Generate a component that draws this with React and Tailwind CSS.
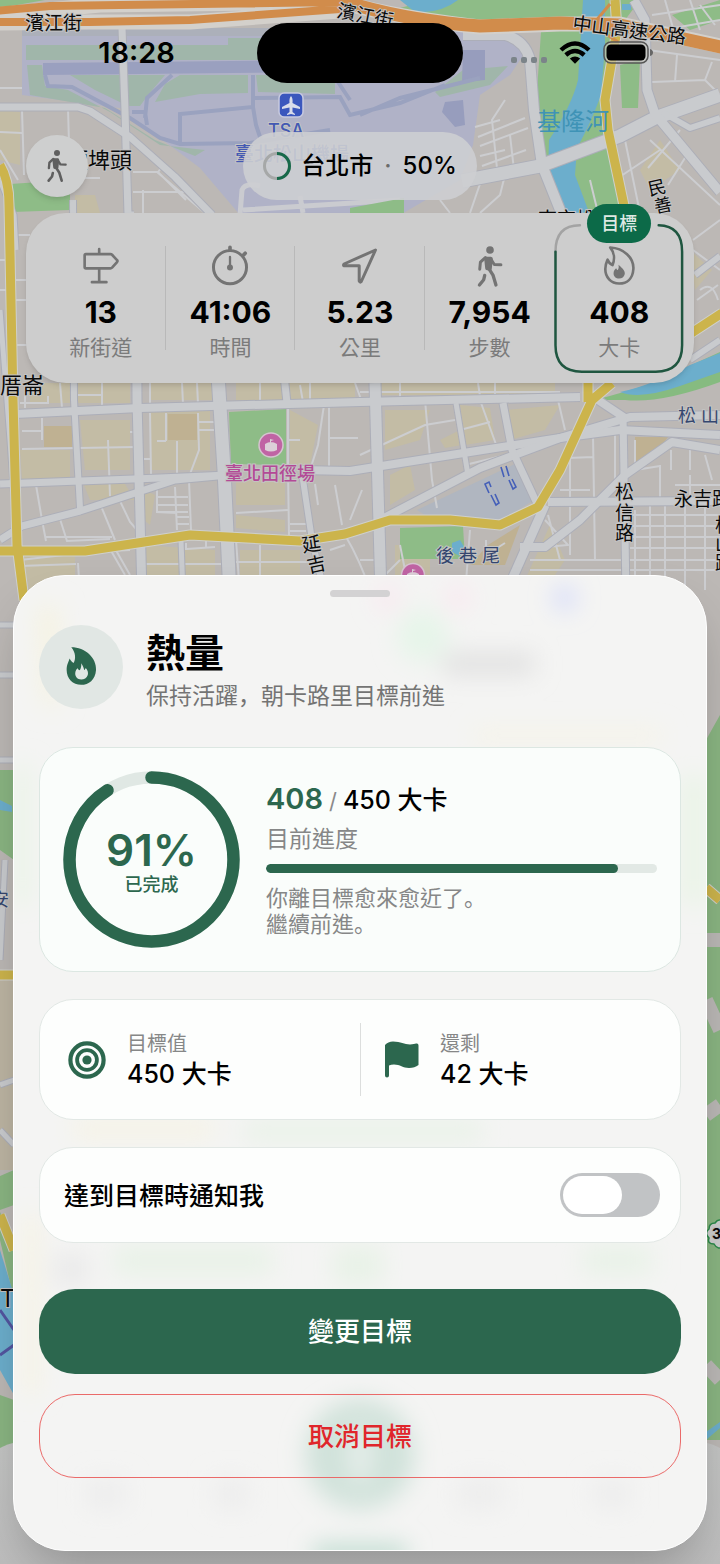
import { useState } from "react";

const FLAME =
  "M25 10C65 12 97 40 95 75C93 105 75 119 52 119C27 119 10 100 10 75C10 60 15 52 17 47C20 55 25 60 32 63C38 48 39 26 25 10Z";
const FLAME_CORE =
  "M50 62C65 75 70 82 69 90C67 100 60 104 52 104C42 104 35 98 35 88C35 80 40 76 43 73C45 78 47 78 48 78C51 73 51 68 50 62Z";
const FLAME_SOLID =
  "M22 6C64 6 99 38 97 75C95 105 75 120 52 120C27 120 8 101 8 75C8 58 14 50 17 40C20 46 25 51 29 54C36 42 36 22 22 6Z";
const FLAME_HOLE =
  "M52 55C58 63 60 70 61 75C64 74 65 71 66 69C72 77 74 83 72 90C69 99 61 104 52 104C41 104 34 96 34 86C34 78 38 73 41 70C43 74 45 76 48 76C52 70 53 62 52 55Z";

function SignpostIcon() {
  return (
    <svg viewBox="0 0 112 120" className="h-10 w-[37px]" fill="none" stroke="currentColor" strokeWidth="8" strokeLinecap="round" strokeLinejoin="round">
      <path d="M52 9V23M12 24H86Q89 24 91 26L106 42Q109 45 106 48L91 65Q89 67 86 67H12Q8 67 8 63V28Q8 24 12 24ZM52 67V108M30 109H74" />
    </svg>
  );
}

function StopwatchIcon() {
  return (
    <svg viewBox="0 0 120 130" className="h-[43px] w-10" fill="none" stroke="currentColor" strokeWidth="9" strokeLinecap="round">
      <circle cx="60" cy="67" r="50" />
      <path d="M60 36V67" strokeWidth="7" />
      <circle cx="60" cy="68" r="9" fill="currentColor" stroke="none" />
      <path d="M60 7V14M102 29L106 25" strokeWidth="11" />
    </svg>
  );
}

function ArrowIcon() {
  return (
    <svg viewBox="0 0 40 40" className="h-10 w-10" fill="none" stroke="currentColor" strokeWidth="3" strokeLinejoin="round">
      <path d="M35.500 4L4 18Q3 19.500 4 19.800H19.200V35Q20 37 21.300 35.500Z" />
    </svg>
  );
}

function WalkIcon({ className = "h-[43px] w-[30px]" }) {
  return (
    <svg viewBox="0 0 90 130" className={className} fill="none" stroke="currentColor" strokeLinecap="round" strokeLinejoin="round">
      <circle cx="45" cy="15" r="11.5" fill="currentColor" stroke="none" />
      <path d="M34 42L37 70L44 71L47 42Z" fill="currentColor" strokeWidth="13" />
      <path d="M31 38L16 52L14 73" strokeWidth="9" />
      <path d="M47 42L58 59L78 60" strokeWidth="9" />
      <path d="M42 72L54 91L63 121" strokeWidth="10" />
      <path d="M29 92L26 105L13 121" strokeWidth="10" />
    </svg>
  );
}

function FlameIcon({ filled = false }) {
  return (
    <svg viewBox="0 0 106 132" className="h-11 w-[35px]">
      {filled ? (
        <path d={FLAME_SOLID + FLAME_HOLE} fill="currentColor" fillRule="evenodd" />
      ) : (
        <>
          <path d={FLAME} fill="none" stroke="currentColor" strokeWidth="8" strokeLinejoin="round" />
          <path d={FLAME_CORE} fill="currentColor" />
        </>
      )}
    </svg>
  );
}

function TargetIcon() {
  return (
    <svg viewBox="0 0 38 38" className="h-[38px] w-[38px] shrink-0" fill="none" stroke="currentColor">
      <circle cx="19" cy="19" r="16.6" strokeWidth="4.2" />
      <circle cx="19" cy="19" r="9.9" strokeWidth="3.8" />
      <circle cx="19" cy="19" r="4.6" fill="currentColor" stroke="none" />
    </svg>
  );
}

function FlagIcon() {
  return (
    <svg viewBox="0 0 34 37" className="h-[37px] w-[34px] shrink-0" fill="currentColor">
      <path d="M0 4Q3 .5 8 .5C16 .5 19 3.5 25 3.5C28 3.5 30 3 31 2.6Q33.5 2 33.5 4.5V24C31 26 28 27 24 27C18 27 15 23.5 9 23.5Q6 23.5 4 24.5V34.5A2 2 0 0 1 0 34.5Z" />
    </svg>
  );
}

const majorRoads = [
  ["M122 28L125 110L128 215L134 215", 7],
  ["M0 107H78L90 111L130 137L175 177L212 215", 7],
  ["M463 35H505Q525 40 530 60L534 110L542 165L562 215", 10],
  ["M462 181L540 166L620 136L655 118L720 95", 13],
  ["M634 0L645 20L647 90L655 114L720 192", 9],
  ["M662 112L690 128L720 118", 6],
  ["M695 275L720 256M690 360L720 340", 6],
  ["M73 200L74 400L80 508", 6],
  ["M136 215L137 400L142 595", 9],
  ["M218 375L224 470L230 595", 13],
  ["M284 375L287 403", 7],
  ["M15 414L140 408L360 402L580 397", 8],
  ["M0 484L160 478L228 475", 7],
  ["M0 540L22 526L80 511L175 480L228 475", 7],
  ["M300 470L350 471L470 452L560 438L620 430L720 435", 8],
  ["M382 519L480 468L560 438L630 417L720 415", 8],
  ["M375 383L381 595", 11],
  ["M456 403L468 475", 5],
  ["M503 403L512 450L540 510", 7],
  ["M623 415L626 595", 7],
  ["M520 547H545L580 520L625 475L672 442L720 450", 8],
  ["M548 502L720 501", 8],
  ["M545 505L505 595", 9],
  ["M595 398L625 418", 8],
  ["M302 473L312 540L325 595", 6],
  ["M181 540L183 595", 5],
  ["M0 180L14 215L16 250M0 310L10 440L14 500", 5],
  ["M0 625H14M0 675H14M0 760H14M5 860L0 960M0 1085L14 1080M0 1130L14 1145", 5],
];

const minorRoads = [
  "M22 88H0M22 110L24 175M68 108L70 180M0 132L22 133M0 150L18 180M70 178H100",
  "M130 135L154 154M133 172H158L165 163M133 172L157 172L205 213M133 192H190M143 190V213M158 172L186 200",
  "M475 127L500 120M478 137L525 118M480 146L528 128M480 156L505 150M482 166L526 150M484 175L512 168M505 100L492 120L498 178M510 135L514 170",
  "M648 50L720 60M652 82L705 80L720 95M677 55L675 82M705 80L712 62M650 140L720 205M625 140L640 213M680 130L648 168M690 150L668 185M618 178L660 150",
  "M652 15L720 5M662 30L720 20M665 0L675 35M690 0L700 30M700 5L715 25",
  "M482 178L470 213M505 175L500 195L480 213M440 200L450 213M590 180L598 213",
  "M693 240L720 220M697 300L718 285M693 250L720 270M700 290Q712 280 718 300",
  "M15 235H30M15 280H30M15 300H30M15 345H30M0 260H14M0 290H14",
  "M22 431H42V440M42 418V431M22 449L135 447M76 395H103M102 380V406M20 403H48V396M182 383L183 404M197 383L198 404",
  "M108 440L110 496M36 485L42 520L46 541M60 519L67 541L110 539M101 506L115 540M120 501L130 522L137 530M46 537H112M166 413V441M150 413L151 474M143 459H151M177 441V476M198 413L199 450L190 474M166 441H157M199 422H215M199 430H215M157 490V512L177 513M175 487L177 530M189 480L191 530M157 497H188M157 505H188M157 512H188M177 517H189M177 524H189M130 432H136",
  "M20 560L90 552L130 550M20 566L76 564M78 563L80 595M110 549L125 575M113 545L130 575M143 564H225M186 550V543M187 549L215 547M206 541V548M236 562H310M236 513L288 510",
  "M288 405V470L289 535M300 440H288M324 405L318 445L310 470M329 405V468M330 438H358M335 485L342 525M362 490L350 520M290 524H306M290 531H306M315 484L318 505",
  "M360 455L425 425L455 420M425 400L432 480L437 508M460 430L490 422M480 400L498 450M506 455L465 465M466 470L505 460M558 400L565 430M570 430V555M593 435L595 560M615 435V480M568 458L593 457",
  "M560 490H590M548 515L560 560M545 520L568 545L535 548M530 560H720M530 570H720M525 585H620M635 510V590M650 505V590M665 505V590M685 505V595M705 505V590M630 515H720M630 526H720M630 537H720M630 548H720M635 440V470L660 466M671 450V470M690 448V470M705 455L712 480M660 465V500M690 475V495M675 485H720",
  "M25 383V408M60 383L62 408M150 383V405M260 383V402M310 383V402M355 383L362 402M400 383V400M478 383L480 396M495 383V396M300 385L303 402M360 392H560",
  "M236 540L240 595M260 545V595M345 535Q360 560 372 595M330 550L345 545M360 560H376M385 575L400 560M400 545L410 595M470 530L465 595M486 540V555L505 543",
];

const yellowRoads =
  "M0 165Q9 180 9 205L13 400L17 545L24 600M0 551H85L190 535L300 541L345 534L390 520L450 520L500 525L538 507L560 470L592 400L612 383M588 375V402M615 0L617 30L605 100L608 130L626 215M690 334L722 313M0 975H14M0 1215L14 1250M706 888L720 900";

const blocks = [
  "M80 420H130V470H85ZM20 450H70V480H22ZM150 410H210V470H150ZM82 480L120 476L135 500L90 500ZM236 480H285V505H236ZM236 515L285 520V532L236 528ZM144 490L155 495L150 525L144 520Z",
  "M290 410L318 425L310 465H290ZM385 410H430L420 440L385 450ZM440 440L460 430L462 445L445 448ZM390 475L410 465L415 490L390 505ZM460 405L490 408L495 440L465 445ZM506 410L560 405L545 430L510 440ZM143 545L215 550V595H145ZM20 545L75 553V595H30ZM240 550H300V595H240ZM550 525L565 560L545 590L525 580Z",
  "M30 383H130V403H30ZM150 383H215V400H150ZM236 383H355V400H236ZM380 383H555V395H380ZM660 140L680 170L650 190L640 170ZM75 195H95L100 213H75ZM395 545H430V580H395ZM0 110L20 112L20 165L0 160ZM690 250L712 270L695 290Z",
];

function MapBackground() {
  return (
    <svg viewBox="0 0 720 1564" preserveAspectRatio="xMidYMin slice" className="absolute inset-0 h-full w-full" fill="none" aria-hidden="true">
      <defs>
        <linearGradient id="dock" x1="0" y1="1440" x2="0" y2="1564" gradientUnits="userSpaceOnUse">
          <stop offset="0" stopColor="#c4c5c4" />
          <stop offset="1" stopColor="#bdbdbd" />
        </linearGradient>
      </defs>
      <rect width="720" height="1564" fill="#bcb8b5" />
      {blocks.map((d) => (
        <path key={d} d={d} fill="#c3bca5" />
      ))}
      <path d="M44 426H72V447H44ZM168 414H197V440H168ZM635 437H668L650 462H635ZM488 545L520 525L505 565H470Z" fill="#bfb192" />

      {/* airport */}
      <path d="M22 28L500 30L530 45L510 75L480 95L473 145L460 180L400 215H240L200 168L120 108L22 95Z" fill="#b0b2c7" />
      <path d="M22 28H340V36H22Z" fill="#acb0ba" />
      <path d="M26 45H228V38H345V60H26ZM27 65H42L45 86L68 90L110 112L160 145L205 150L195 156L155 140L105 108L30 95ZM70 75H165L148 95L140 106H128L95 90ZM180 75H248V93L200 94L155 102L165 84ZM256 75H335V94L258 92ZM463 70L508 66L490 85L440 97L435 92Z" fill="#a0b6aa" />
      <path d="M43 63L340 60V72L43 75Z" fill="#9aa0bf" />
      <path d="M463 50H485V80L462 82ZM445 102L463 100L465 125L455 127L442 112Z" fill="#979dbd" />
      <path d="M45 75L48 86L72 87L130 118L160 138L180 144L250 143L330 130M180 144V114L253 107V75M145 118L147 98L172 75M132 112H145L147 125M253 107L256 125L262 143M255 98L340 97L350 115L400 103L445 85M338 82L350 100M360 115L400 98L480 78" stroke="#9aa2bf" strokeWidth="4" />
      <path d="M240 215L242 190Q245 182 260 186M300 196L303 213M243 210L400 200" stroke="#cacbd0" strokeWidth="5" />

      {/* parks */}
      <path d="M541 32L575 20L580 0H630L612 60L603 100L608 150L625 215H558L545 165L535 120ZM620 65L640 60L638 108L622 108ZM430 0H640L625 20L480 25L400 8ZM0 0H45L0 8ZM672 15L720 0V20L690 30ZM10 184L70 180V210L12 212ZM229 412L286 409V465L231 464ZM400 528L463 526L465 559L400 559ZM350 208L404 198V215H350ZM555 200H580V215H555Z" fill="#8ebc87" />
      <path d="M595 400Q625 392 650 384L720 352V382Q660 404 625 400Z" fill="#86bb80" />
      <path d="M0 770H14V860L0 850ZM0 1176L14 1170V1205L0 1210ZM0 1212L14 1245V1300L0 1240ZM0 1395L14 1400V1450H0ZM706 740L720 715V1440H706Z" fill="#8ab582" />
      <path d="M0 980H14V1170H0Z" fill="#bdb5a3" />
      <path d="M583 0H605V45L601 95Q590 125 577 148L575 175L590 215H568L548 175L549 140Q572 105 578 80ZM400 0H458Q440 14 415 12ZM452 543L460 540L466 550L460 556L452 552Z" fill="#6caecc" />
      <path d="M620 392Q650 386 690 365L720 353V372L680 386Q640 400 620 392ZM622 4H631V10H622ZM0 800L12 806V812L0 810ZM0 1250L14 1295V1395L0 1370ZM706 1432L720 1422V1428L706 1440Z" fill="#6caecc" />
      <path d="M417 510L517 463L534 500L505 518L490 520L425 515Z" fill="#b0b6c0" />

      {/* streets */}
      {minorRoads.map((d) => (
        <path key={d} d={d} stroke="#cccdd0" strokeWidth="2" />
      ))}
      {majorRoads.map(([d, w]) => (
        <path key={d} d={d} stroke="#acaeb8" strokeWidth={w + 2} strokeLinejoin="round" />
      ))}
      {majorRoads.map(([d, w]) => (
        <path key={d} d={d} stroke="#c9cbce" strokeWidth={w} strokeLinejoin="round" />
      ))}
      <g strokeLinejoin="round">
        <path d={yellowRoads} stroke="#cfd0cc" strokeWidth="11" />
        <path d={yellowRoads} stroke="#ccb44c" strokeWidth="9" />
        <path d="M-5 15L100 5L340 2Q400 18 480 27L560 24L620 24L725 47M-5 23L90 22L190 22L340 11" stroke="#d3d0cb" strokeWidth="15" />
        <path d="M-5 11L50 6L120 5L340 2M-5 22L90 22L190 20L340 9" stroke="#d18c4b" strokeWidth="8" />
        <path d="M340 0Q400 20 480 26L560 23L620 25L725 48" stroke="#d18c4b" strokeWidth="13" />
        <path d="M595 22L610 4M600 30L618 42" stroke="#d18c4b" strokeWidth="3" />
      </g>
      <path d="M489 493L485 484L489 482L491 487M491 495L496 505L499 503L495 494M501 467L504 477M506 466L509 476M509 480L513 489L516 487L512 479" stroke="#4560b8" strokeWidth="1.600" />
      <path d="M0 1310L14 1330M0 1355L14 1345" stroke="#5355a0" strokeWidth="3" />
      <path d="M706 940H720M706 1000L720 1030M706 1115L720 1105M706 1365L720 1380" stroke="#bbb8b6" strokeWidth="14" />

      {/* pins */}
      <rect x="279" y="93" width="24" height="24" rx="5" fill="#3b57bd" stroke="#c7cae0" strokeWidth="1.5" />
      <path d="M291 96Q293 98 292.500 103L300 107V109L292.500 107.500V112L295 114V115L291 114L287 115V114L289.500 112V107.500L282 109V107L289.500 103Q289 98 291 96Z" fill="#d9dcea" />
      <circle cx="271" cy="445" r="12" fill="#c064a4" stroke="#d6c4d0" strokeWidth="1.5" />
      <path d="M265 444Q271 440 277 444V450Q271 453 265 450ZM270 442V439L274 440L271 441V443" fill="#dcd0d8" />
      <circle cx="413" cy="575" r="11.500" fill="#c064a4" stroke="#d6c4d0" strokeWidth="1.500" />
      <path d="M407 574Q413 570 419 574V582H407ZM412 572V569L416 570L413 571V573" fill="#dcd0d8" />
      <path d="M709 1229Q709 1223 715 1223Q719 1217 724 1223V1246Q718 1251 714 1244Q707 1244 709 1238Q704 1233 709 1229Z" fill="#cfcfcf" stroke="#2b8a4a" strokeWidth="1.500" />

      <g fontSize="19" fill="#0a0a0a" stroke="#c4c4c4" strokeWidth="2" paintOrder="stroke">
        <text x="25" y="30">濱江街</text>
        <text x="336" y="17" transform="rotate(11 336 17)">濱江街</text>
        <text x="572" y="30" transform="rotate(7 572 30)">中山高速公路</text>
        <text x="66" y="168" fontSize="22">頂埤頭</text>
        <text x="538" y="226">南京松</text>
        <text x="648" y="194" fontSize="18" transform="rotate(-12 657 188)">民</text>
        <text x="654" y="212" fontSize="18" transform="rotate(-12 662 206)">善</text>
        <text x="0" y="393" fontSize="22">厝崙</text>
        <text x="302" y="551" transform="rotate(-8 311 545)">延</text>
        <text x="307" y="571" transform="rotate(-12 317 565)">吉</text>
        <text x="615" y="499">松</text>
        <text x="615" y="520">信</text>
        <text x="615" y="540">路</text>
        <text x="674" y="506">永吉路</text>
        <text x="715" y="532">松</text>
        <text x="715" y="551">山</text>
        <text x="715" y="570">路</text>
        <text x="0" y="1307" fontSize="24">T</text>
        <text x="712" y="1239" fontSize="14" fontWeight="700">3</text>
        <g fill="#34466f">
          <text x="678" y="422" fontSize="18">松 山</text>
          <text x="436" y="562" fontSize="18">後 巷 尾</text>
          <text x="-9" y="906" fontSize="18">安</text>
        </g>
        <text x="225" y="480" fontSize="18" fontWeight="500" fill="#b34a96">臺北田徑場</text>
        <g fill="#4359b3" fontWeight="500">
          <text x="268" y="137" fontSize="18">TSA</text>
          <text x="235" y="161">臺北松山機場</text>
        </g>
      </g>
      <text x="537" y="130" fontSize="24" fill="#3f93b6">基隆河</text>

      <path d="M0 1448Q14 1440 40 1440H680Q706 1440 720 1448V1564H0Z" fill="url(#dock)" />
    </svg>
  );
}

function StatusBar() {
  return (
    <header className="grid grid-cols-[1fr_206px_1fr] items-center">
      <time className="pl-4 text-center text-[29px] font-semibold">18:28</time>
      <div className="h-[60px] rounded-full bg-black" />
      <div className="flex items-center justify-center gap-3 pr-5">
        <svg viewBox="0 0 36 24" className="h-6 w-9" fill="#7b8489">
          <rect x="0" y="16" width="6" height="6" rx="2" />
          <rect x="10" y="16" width="6" height="6" rx="2" />
          <rect x="20" y="16" width="6" height="6" rx="2" />
          <rect x="30" y="16" width="6" height="6" rx="2" />
        </svg>
        <svg viewBox="0 0 32 24" className="h-6 w-8" fill="none" stroke="black" strokeWidth="4.400">
          <path d="M2 9Q16 -4 30 9M6.800 14Q16 6 25.200 14" />
          <path d="M10.800 17.600Q16 13.300 21.200 17.600L16 22.800Z" fill="black" stroke="none" />
        </svg>
        <svg viewBox="0 0 50 24" className="h-6 w-[50px]">
          <rect x="1" y="1" width="44" height="21" rx="7" fill="#c3c3bd" fillOpacity="0.600" stroke="#555" strokeWidth="1.500" />
          <rect x="3.500" y="3.500" width="39" height="16" rx="4.500" fill="black" />
          <path d="M47 8Q50 9 50 11.500T47 15Z" fill="#666" />
        </svg>
      </div>
    </header>
  );
}

const stats = [
  { icon: <SignpostIcon />, value: "13", label: "新街道" },
  { icon: <StopwatchIcon />, value: "41:06", label: "時間" },
  { icon: <ArrowIcon />, value: "5.23", label: "公里" },
  { icon: <WalkIcon />, value: "7,954", label: "步數" },
  { icon: <FlameIcon />, value: "408", label: "大卡", goal: true },
];

function StatItem({ stat, divider }) {
  return (
    <li className="relative flex flex-1 flex-col items-center pt-[21px] pb-3">
      {divider && <span className="absolute top-[23px] right-0 h-[104px] w-px bg-[#b9b9b9]" />}
      {stat.goal && (
        <>
          <svg viewBox="0 0 130 150" className="absolute inset-0 h-full w-full" fill="none" strokeWidth="2.500" strokeLinecap="round">
            <path d="M1.500 28Q1.500 1.500 26 1.500" stroke="#a3a3a3" />
            <path d="M105 1.500Q128.500 2 128.500 28V122Q128.500 148.500 102 148.500H28Q1.500 148.500 1.500 122V28" stroke="#1f5640" />
          </svg>
          <span className="absolute -top-[19px] left-1/2 -translate-x-1/2 rounded-full bg-[#0c6a48] px-[14px] py-1 text-[18px] leading-[31px] font-medium whitespace-nowrap text-[#dfe9e4]">
            目標
          </span>
        </>
      )}
      <span className="flex h-11 items-center text-[#747474]">{stat.icon}</span>
      <strong className="mt-[10px] text-[30px] leading-7 font-bold">{stat.value}</strong>
      <span className="mt-2 text-[21px] leading-7 text-[#7b7b7b]">{stat.label}</span>
    </li>
  );
}

// soft colours of the map showing through the sheet
function SheetGlow() {
  return (
    <svg viewBox="0 0 694 976" preserveAspectRatio="none" className="absolute inset-0 h-full w-full" aria-hidden="true">
      <defs>
        <filter id="soft" x="-50%" y="-50%" width="200%" height="200%">
          <feGaussianBlur stdDeviation="12" />
        </filter>
      </defs>
      <g filter="url(#soft)">
        <circle cx="410" cy="60" r="26" fill="#e6f5e9" />
        <circle cx="552" cy="22" r="11" fill="#cfd6fb" />
        <circle cx="375" cy="22" r="12" fill="#fae6ef" />
        <circle cx="445" cy="22" r="12" fill="#fae6ef" />
        <rect x="430" y="78" width="92" height="20" fill="#dfdfdf" />
        <path d="M22 30H46V130H28Z" fill="#f5f3e2" />
        <path d="M0 190H16V330H0ZM670 200H694V330H670Z" fill="#e9f4e6" />
        <path d="M230 546H470V566H230ZM100 672H260V700H100ZM320 672H370V710H320ZM570 672H640V700H570Z" fill="#e8f2e7" />
        <path d="M60 546H200V562H60ZM10 640H24V820H10ZM460 155H650V165H460Z" fill="#f6f3e2" />
        <path d="M40 680H74V710H40Z" fill="#e9e9e9" />
        <circle cx="347" cy="880" r="55" fill="#d0e2da" />
        <rect x="337" y="855" width="20" height="52" fill="#e9efec" />
        <path d="M72 905H112V935H72ZM200 905H236V935H200ZM444 905H490V935H444ZM580 905H618V935H580Z" fill="#ededed" />
        <path d="M300 972H394V990H300Z" fill="#b7d8cb" />
      </g>
    </svg>
  );
}

function ProgressRing({ percent }) {
  return (
    <div className="relative h-[177px] w-[177px] shrink-0">
      <svg viewBox="0 0 177 177" className="h-full w-full -rotate-90" fill="none" strokeWidth="12.500">
        <circle cx="88.500" cy="88.500" r="82" stroke="#e0e8e4" />
        <circle cx="88.500" cy="88.500" r="82" stroke="#2c674e" strokeLinecap="round" pathLength="100" strokeDasharray={`${percent} 100`} />
      </svg>
      <div className="absolute inset-0 flex flex-col items-center justify-center pt-2 text-[#2c674e]">
        <span className="text-[44px] leading-[42px] font-semibold">{percent}%</span>
        <span className="text-[18px] leading-7 font-medium">已完成</span>
      </div>
    </div>
  );
}

function Punct({ children }) {
  return (
    <span className="leading-none font-['Noto_Sans_CJK_SC',sans-serif]" lang="zh-Hans">
      {children}
    </span>
  );
}

export default function App() {
  const [notify, setNotify] = useState(false);
  const current = 408;
  const goal = 450;

  return (
    <div
      lang="zh-Hant"
      className="relative min-h-screen overflow-hidden bg-[#bcb8b5] pt-[23px] pb-[13px] font-['Inter','Noto_Sans_CJK_TC',sans-serif] text-black"
    >
      <MapBackground />

      <div className="relative">
        <StatusBar />

        <div className="mt-[49px] grid grid-cols-[62px_1fr_62px] items-center px-[26px]">
          <button type="button" aria-label="步行" className="flex h-[62px] w-[62px] items-center justify-center rounded-full bg-[#cecfcf] text-[#5f5f5f] shadow-md">
            <WalkIcon className="h-[34px] w-6" />
          </button>
          <div className="flex h-[68px] items-center justify-self-center rounded-full bg-[#cdced1]/90 px-5 text-2xl font-medium">
            <svg viewBox="0 0 28 28" className="mr-[10px] h-7 w-7" fill="none" strokeWidth="3">
              <circle cx="14" cy="14" r="12.500" stroke="#a6a8a8" />
              <path d="M14 1.500A12.500 12.500 0 0 1 14 26.500" stroke="#17694a" />
            </svg>
            <span>台北市</span>
            <span className="mx-[11px] text-[#6b6b6b]">·</span>
            <span>50%</span>
          </div>
        </div>

        <ul className="mx-[26px] mt-[13px] flex rounded-[40px] bg-[#cdcdcd] p-[10px] pb-[9px] shadow-md">
          {stats.map((stat, i) => (
            <StatItem key={stat.label} stat={stat} divider={i < 3} />
          ))}
        </ul>

        <main className="relative mx-[13px] mt-[192px] overflow-hidden rounded-[52px] border border-white bg-[#f4f4f3] px-[25px] pt-[14px] pb-[72px] shadow-2xl">
          <SheetGlow />
          <div className="relative">
            <div className="mx-auto h-[7px] w-[60px] rounded-full bg-[#d3d2d3]" />

            <div className="mt-7 flex h-[84px] items-center gap-[23px]">
              <div className="flex h-[84px] w-[84px] shrink-0 items-center justify-center rounded-full bg-[#e1e7e4] text-[#2c674e]">
                <FlameIcon filled />
              </div>
              <div className="pt-[7px]">
                <h1 className="text-[39px] leading-[50px] font-bold">熱量</h1>
                <p className="text-[23px] leading-9 text-[#747474]">
                  保持活躍<Punct>，</Punct>朝卡路里目標前進
                </p>
              </div>
            </div>

            {/* Progress */}
            <section className="mt-[38px] flex items-center gap-[26px] rounded-[34px] border border-[#dce7e2] bg-[#fafdfb] p-[23px]">
              <ProgressRing percent={91} />
              <div className="min-w-0 flex-1">
                <p className="text-[25px] leading-[34px] font-medium">
                  <span className="text-[29px] leading-none font-semibold text-[#2c674e]">{current}</span>
                  <span className="mx-[6px] text-[22px] leading-none font-normal text-[#8a8a8a]">/</span>
                  {goal} 大卡
                </p>
                <p className="mt-2 text-[23px] leading-7 text-[#868787]">目前進度</p>
                <div className="mt-[11px] h-[9px] overflow-hidden rounded-full bg-[#e2e9e5]">
                  <div className="h-full rounded-full bg-[#2c674e]" style={{ width: `${Math.floor((current / goal) * 100)}%` }} />
                </div>
                <p className="mt-3 text-[22px] leading-[26px] text-[#868787]">
                  你離目標愈來愈近了<Punct>。</Punct>
                  <br />
                  繼續前進<Punct>。</Punct>
                </p>
              </div>
            </section>

            {/* Goal and remaining */}
            <section className="mt-[27px] grid h-[121px] grid-cols-2 items-center rounded-[34px] border border-[#e2e8e5] bg-[#fdfefd]">
              <div className="flex items-center gap-[21px] pl-7 text-[#2c674e]">
                <TargetIcon />
                <div>
                  <p className="text-[20px] leading-7 text-[#868787]">目標值</p>
                  <p className="text-[25px] leading-8 font-medium text-black">450 大卡</p>
                </div>
              </div>
              <div className="flex h-[73px] items-center gap-[21px] border-l border-[#dcdedd] pl-6 text-[#2c674e]">
                <FlagIcon />
                <div>
                  <p className="text-[20px] leading-7 text-[#868787]">還剩</p>
                  <p className="text-[25px] leading-8 font-medium text-black">42 大卡</p>
                </div>
              </div>
            </section>

            {/* Notification */}
            <section className="mt-[27px] flex h-24 items-center justify-between rounded-[34px] border border-[#e2e8e5] bg-[#fdfefd] pr-5 pl-6">
              <label htmlFor="notify" className="pt-1 text-[25px] font-medium">
                達到目標時通知我
              </label>
              <input
                id="notify"
                type="checkbox"
                role="switch"
                checked={notify}
                onChange={(e) => setNotify(e.target.checked)}
                className="flex h-11 w-[100px] cursor-pointer appearance-none rounded-full bg-[#c1c3c5] p-[3px] before:h-[38px] before:w-[59px] before:rounded-full before:bg-white checked:justify-end checked:bg-[#2c674e]"
              />
            </section>

            <button type="button" className="mt-[46px] block h-[85px] w-full rounded-[36px] bg-[#2c674e] text-[26px] font-medium text-white">
              變更目標
            </button>
            <button type="button" className="mt-5 block h-[84px] w-full rounded-[36px] border-[1.5px] border-[#ea6a69] text-[26px] font-medium text-[#e0262b]">
              取消目標
            </button>
          </div>
        </main>
      </div>
    </div>
  );
}
